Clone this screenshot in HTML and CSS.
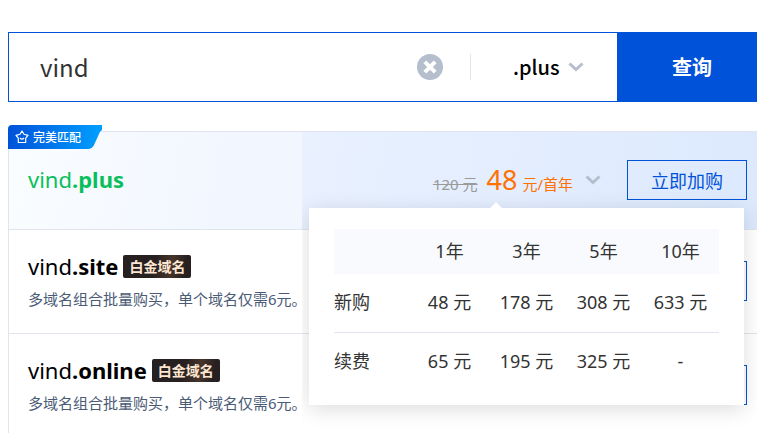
FILE: index.html
```html
<!DOCTYPE html>
<html lang="zh-CN">

<head>
    <title>域名查询</title>
    <meta charset="utf-8">
    <meta name="viewport" content="width=device-width, initial-scale=1">
    <link rel="stylesheet" href="styles.css">
</head>

<body>
    <form class="search">
        <input class="search_input" type="text" value="vind" aria-label="域名">
        <button class="search_clear" type="reset" aria-label="清空">
            <svg width="26" height="26" viewBox="0 0 26 26">
                <circle cx="13" cy="13" r="13" fill="#b4becc" />
                <path d="M7.8 7.8l10.4 10.4M18.2 7.8L7.8 18.2" stroke="#fff" stroke-width="4" />
            </svg>
        </button>
        <div class="search_suffix">
            <select class="search_select" aria-label="域名后缀">
                <option>.plus</option>
                <option>.site</option>
                <option>.online</option>
            </select>
            <svg class="chevron" width="16" height="10" viewBox="0 0 16 10">
                <path d="M1.5 1.5L8 7.5l6.5-6" />
            </svg>
        </div>
        <button class="search_submit" type="button">查询</button>
    </form>

    <main class="results">
        <section class="result result-match">
            <div class="match_tag">
                <svg width="14" height="14" viewBox="0 0 14 14" fill="none" stroke="#fff" stroke-width="1.2" stroke-linejoin="round">
                    <path d="M7 1l2 3.2 4 1.2-2.3 2.8v4.3H3.3V8.2L1 5.4l4-1.2z" />
                    <path d="M5 8q2 2.4 4 0" />
                </svg>
                <span>完美匹配</span>
            </div>
            <h2 class="domain">vind<b>.plus</b></h2>
            <div class="price">
                <del class="price_old">120 元</del>
                <span class="price_now">48</span>
                <span class="price_unit">元/首年</span>
                <button class="price_toggle" type="button" aria-label="价格详情">
                    <svg class="chevron" width="16" height="10" viewBox="0 0 16 10">
                        <path d="M1.5 1.5L8 7.5l6.5-6" />
                    </svg>
                </button>
            </div>
            <button class="buy" type="button">立即加购</button>

            <div class="popover">
                <table class="price_table">
                    <thead>
                        <tr>
                            <th></th>
                            <th>1年</th>
                            <th>3年</th>
                            <th>5年</th>
                            <th>10年</th>
                        </tr>
                    </thead>
                    <tbody>
                        <tr>
                            <th>新购</th>
                            <td>48 元</td>
                            <td>178 元</td>
                            <td>308 元</td>
                            <td>633 元</td>
                        </tr>
                        <tr>
                            <th>续费</th>
                            <td>65 元</td>
                            <td>195 元</td>
                            <td>325 元</td>
                            <td>-</td>
                        </tr>
                    </tbody>
                </table>
            </div>
        </section>

        <section class="result">
            <div class="info">
                <h2 class="domain">vind<b>.site</b> <span class="platinum">白金域名</span></h2>
                <p class="promo">多域名组合批量购买，单个域名仅需6元。</p>
            </div>
            <button class="buy" type="button" aria-label="立即加购"></button>
        </section>

        <section class="result">
            <div class="info">
                <h2 class="domain">vind<b>.online</b> <span class="platinum">白金域名</span></h2>
                <p class="promo">多域名组合批量购买，单个域名仅需6元。</p>
            </div>
            <button class="buy" type="button" aria-label="立即加购"></button>
        </section>
    </main>
</body>

</html>
```

FILE: styles.css
```css
* {
    box-sizing: border-box;
}

body {
    margin: 0;
    padding: 32px 0 0 8px;
    overflow: hidden;
    background: #fff;
    color: #333;
    font-family: "Noto Sans", "Noto Sans CJK SC", sans-serif;
}

button,
input,
select {
    font-family: inherit;
}

button {
    padding: 0;
    border: 0;
    background: none;
    cursor: pointer;
}

svg {
    display: block;
}

.chevron path {
    fill: none;
    stroke: #b4becc;
    stroke-width: 3;
}

/* search bar */
.search {
    display: flex;
    align-items: center;
    height: 70px;
    border: 1px solid #0052d9;
    border-right: 0;
    font-family: "Noto Sans CJK SC", sans-serif;
}

.search_input {
    flex: 1;
    min-width: 0;
    padding: 0 31px 2px;
    border: 0;
    outline: 0;
    background: none;
    color: #333;
    font-size: 24px;
}

.search_suffix {
    position: relative;
    display: flex;
    align-items: center;
    margin-left: 27px;
    border-left: 1px solid #e1e6f0;
}

.search_suffix .chevron {
    position: absolute;
    right: 33px;
    pointer-events: none;
}

.search_select {
    width: 146px;
    height: 26px;
    padding: 0 0 0 42px;
    border: 0;
    outline: 0;
    appearance: none;
    background: none;
    color: #000;
    font-size: 20px;
    font-weight: 500;
    line-height: 26px;
}

.search_submit {
    align-self: stretch;
    width: 140px;
    margin: -1px 0;
    padding: 0 0 2px 10px;
    background: #0052d9;
    color: #fff;
    font-size: 20px;
    font-weight: bold;
}

/* result list */
.results {
    margin-top: 29px;
    border-top: 1px solid #dfe4ee;
    border-left: 1px solid #dfe4ee;
}

.result {
    position: relative;
    display: flex;
    align-items: center;
    height: 104px;
    padding: 0 10px 2px 19px;
    border-bottom: 1px solid #dfe4ee;
}

.result-match {
    height: 98px;
    background:
        linear-gradient(100deg, #e9f1ff, #dce9fd) right / calc(100% - 293px) 100% no-repeat,
        linear-gradient(100deg, #fafdff, #f1f6ff 240px);
}

.match_tag {
    position: absolute;
    top: -7px;
    left: -1px;
    display: flex;
    align-items: center;
    gap: 4px;
    width: 94px;
    height: 24px;
    padding-left: 7px;
    border-radius: 4px 0 0 0;
    background: linear-gradient(90deg, #0052d9, #00a0ff);
    clip-path: path("M0 0H94V5Q92 6 91 9L86 20Q84 24 80 24H0Z");
    color: #fff;
    font-size: 12px;
    font-weight: 500;
}

.domain {
    display: flex;
    align-items: center;
    margin: 0;
    color: #000;
    font-size: 22px;
    font-weight: normal;
    line-height: 28px;
}

.result-match .domain {
    flex: 1;
    padding-bottom: 2px;
    color: #0abf5b;
}

.info {
    flex: 1;
}

.platinum {
    margin: 2px 0 0 5px;
    padding: 0 6px;
    border-radius: 2px;
    background: linear-gradient(100deg, #262020 45%, #46352b 70%, #262020 90%);
    color: #fde6d2;
    font-size: 14px;
    font-weight: bold;
    line-height: 23px;
}

.promo {
    margin: 8px 0 0;
    color: #4b5b76;
    font-size: 15px;
    line-height: 22px;
}

.price {
    display: flex;
    align-items: baseline;
    margin-right: 26px;
    color: #ff7200;
}

.price_old {
    color: #999;
    font-size: 15px;
}

.price_now {
    margin: 0 5px 0 9px;
    font-size: 27px;
    line-height: 36px;
}

.price_unit {
    font-size: 15px;
}

.price_toggle {
    align-self: center;
    margin-left: 12px;
}

.buy {
    width: 120px;
    height: 40px;
    border: 1px solid #0052d9;
    color: #0052d9;
    font-size: 18px;
}

/* price popover */
.popover {
    position: absolute;
    z-index: 1;
    top: 76px;
    right: 13px;
    width: 435px;
    padding: 21px 25px 13px;
    background: #fff;
    box-shadow: 0 4px 20px rgba(0, 0, 0, 0.14);
    clip-path: inset(-20px -13px -30px -7px);
}

.popover::before {
    content: "";
    position: absolute;
    top: -6px;
    left: 181px;
    border: 6px solid transparent;
    border-top: 0;
    border-bottom-color: #fff;
}

.price_table {
    width: 100%;
    border-collapse: collapse;
    table-layout: fixed;
    font-size: 18px;
    line-height: 24px;
    text-align: center;
}

.price_table th,
.price_table td {
    height: 58px;
    padding: 0 0 2px;
    font-weight: normal;
}

.price_table thead th {
    height: 45px;
    background: #f8fafd;
}

.price_table tbody th {
    text-align: left;
}

.price_table tbody tr + tr {
    border-top: 1px solid #dfe4ee;
}

.price_table tbody tr + tr > * {
    height: 60px;
}
```
